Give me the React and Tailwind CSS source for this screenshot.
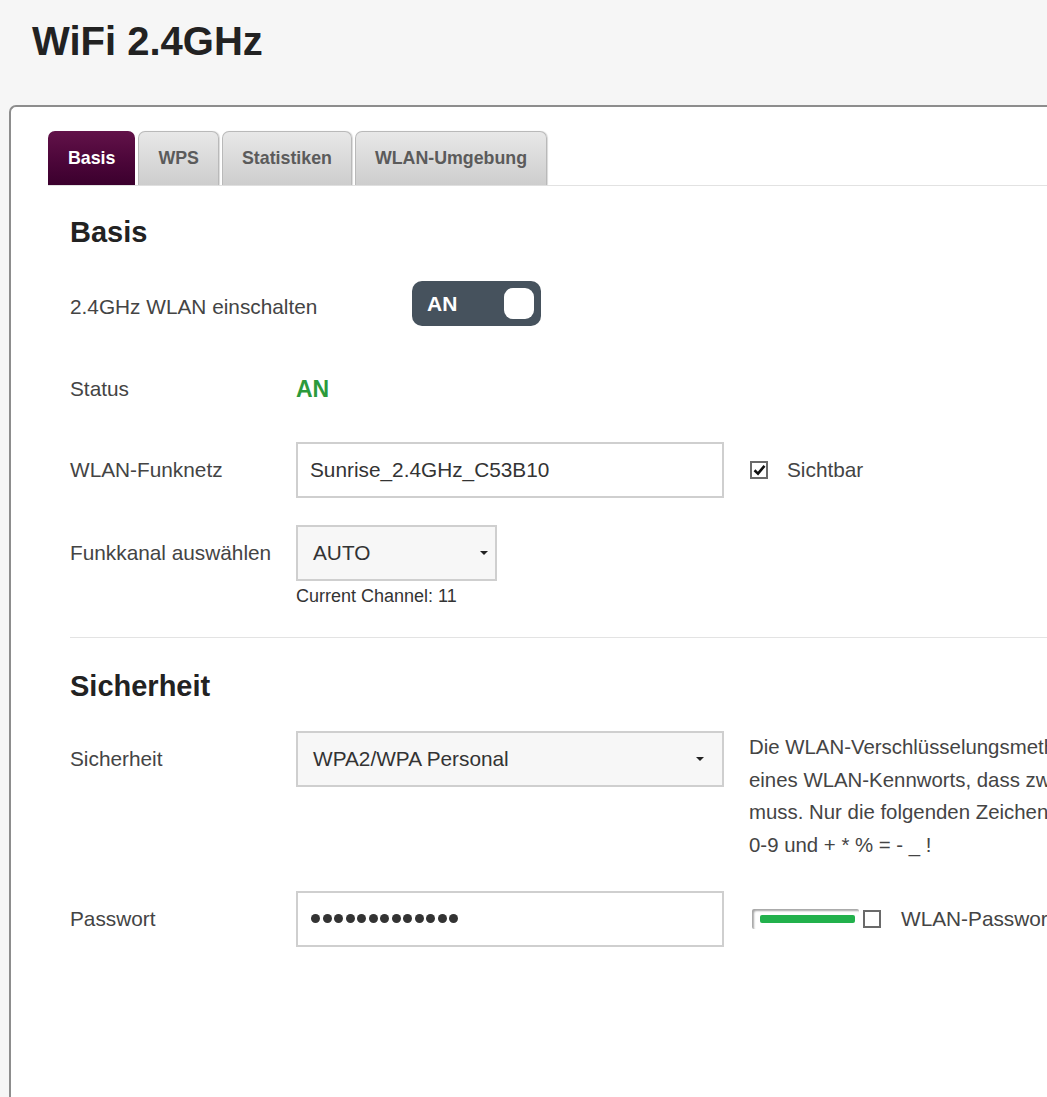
import React from 'react'

const font = "font-['Liberation_Sans',Arial,sans-serif]"

function Tab({ label, active }) {
  if (active) {
    return (
      <div className="flex h-[54px] items-center rounded-t-[7px] bg-gradient-to-b from-[#621249] to-[#3b002d] px-[20px] text-[17.8px] font-bold text-white">
        {label}
      </div>
    )
  }
  return (
    <div className="flex h-[54px] items-center rounded-t-[7px] border border-b-0 border-[#b9b9b9] bg-gradient-to-b from-[#e8e8e8] to-[#cdcdcd] px-[19px] text-[17.8px] font-bold text-[#5b5b5b] shadow-[1px_0_1px_rgba(0,0,0,0.15)]">
      {label}
    </div>
  )
}

function Caret() {
  return <span className="h-0 w-0 border-x-[4px] border-t-[4px] border-x-transparent border-t-[#222]" />
}

export default function App() {
  return (
    <div className={`h-[1097px] w-full overflow-hidden bg-[#f6f6f6] ${font}`}>
      <h1 className="pl-[32px] pt-[21px] text-[40px] font-bold leading-[40px] text-[#222]">WiFi 2.4GHz</h1>

      <div className="ml-[9px] mt-[44px] h-[1100px] w-[1500px] rounded-tl-[7px] border-l-2 border-t-2 border-[#8d8d8d] bg-white pl-[37px] pt-[24px]">
        {/* Tabs */}
        <div className="flex gap-[3px] border-b border-[#e2e2e2]">
          <Tab label="Basis" active />
          <Tab label="WPS" />
          <Tab label="Statistiken" />
          <Tab label="WLAN-Umgebung" />
        </div>

        <div className="pl-[22px] text-[20.8px]">
          <h2 className="mt-[32px] text-[29px] font-bold leading-[29px] text-[#222]">Basis</h2>

          <div className="mt-[34px] flex items-center">
            <div className="w-[342px] shrink-0 whitespace-nowrap pt-[6px] text-[#444]">2.4GHz WLAN einschalten</div>
            <div className="flex h-[45px] w-[129px] items-center justify-between rounded-[10px] bg-[#46525d] pl-[15px] pr-[7px]">
              <span className="text-[21px] font-bold text-white">AN</span>
              <span className="h-[31px] w-[30px] rounded-[9px] bg-white" />
            </div>
          </div>

          <div className="mt-[41px] flex h-[44px] items-center">
            <div className="w-[226px] shrink-0 text-[#444]">Status</div>
            <div className="text-[23px] font-bold text-[#2b9a3b]">AN</div>
          </div>

          <div className="mt-[31px] flex items-center">
            <div className="w-[226px] shrink-0 text-[#444]">WLAN-Funknetz</div>
            <div className="flex h-[56px] w-[428px] items-center border-2 border-[#cfcfcf] bg-white pl-[12px] text-[#333]">
              Sunrise_2.4GHz_C53B10
            </div>
            <div className="ml-[26px] flex items-center">
              <span className="flex h-[18px] w-[18px] items-center justify-center border-2 border-[#6a6a6a] bg-white">
                <svg width="13" height="12" viewBox="0 0 13 12">
                  <path d="M1.5 6.2 L5 9.6 L11.5 1.8" fill="none" stroke="#111" strokeWidth="2.6" />
                </svg>
              </span>
              <span className="ml-[19px] text-[#444]">Sichtbar</span>
            </div>
          </div>

          <div className="mt-[27px] flex">
            <div className="flex h-[56px] w-[226px] shrink-0 items-center text-[#444]">Funkkanal auswählen</div>
            <div>
              <div className="flex h-[56px] w-[201px] items-center justify-between border-2 border-[#cfcfcf] bg-[#f7f7f7] pl-[15px] pr-[7px] text-[#333]">
                AUTO
                <Caret />
              </div>
              <div className="mt-[5px] text-[18px] leading-[20px] text-[#333]">Current Channel: 11</div>
            </div>
          </div>

          <div className="mt-[31px] h-px bg-[#e3e3e3]" />

          <h2 className="mt-[34px] text-[29px] font-bold leading-[29px] text-[#222]">Sicherheit</h2>

          <div className="mt-[30px] flex items-start">
            <div className="flex h-[56px] w-[226px] shrink-0 items-center text-[#444]">Sicherheit</div>
            <div className="flex h-[56px] w-[428px] shrink-0 items-center justify-between border-2 border-[#cfcfcf] bg-[#f7f7f7] pl-[15px] pr-[18px] text-[#333]">
              WPA2/WPA Personal
              <Caret />
            </div>
            <p className="ml-[25px] whitespace-nowrap text-[20.4px] leading-[32.7px] text-[#444]">
              Die WLAN-Verschlüsselungsmethode WPA2/WPA Personal erfordert die Eingabe
              <br />
              eines WLAN-Kennworts, dass zwischen 8 und 63 Zeichen lang sein
              <br />
              muss. Nur die folgenden Zeichen sind erlaubt: a-z, A-Z,
              <br />
              0-9 und + * % = - _ !
            </p>
          </div>

          <div className="mt-[29px] flex items-center">
            <div className="w-[226px] shrink-0 text-[#444]">Passwort</div>
            <div className="flex h-[56px] w-[428px] shrink-0 items-center gap-[2.5px] border-2 border-[#cfcfcf] bg-white pl-[13px]">
              {Array.from({ length: 13 }).map((_, i) => (
                <span key={i} className="h-[9px] w-[9px] rounded-full bg-[#333]" />
              ))}
            </div>
            <div className="ml-[28px] flex h-[20px] w-[107px] items-center rounded-[2px] bg-white pl-[8px] pr-[4px] shadow-[inset_2px_2px_2px_rgba(0,0,0,0.35)]">
              <div className="h-[8px] w-full rounded-[2px] bg-[#22b14c]" />
            </div>
            <span className="ml-[4px] h-[18px] w-[18px] border-2 border-[#6a6a6a] bg-white" />
            <span className="ml-[20px] whitespace-nowrap text-[#444]">WLAN-Passwort anzeigen</span>
          </div>
        </div>
      </div>
    </div>
  )
}
